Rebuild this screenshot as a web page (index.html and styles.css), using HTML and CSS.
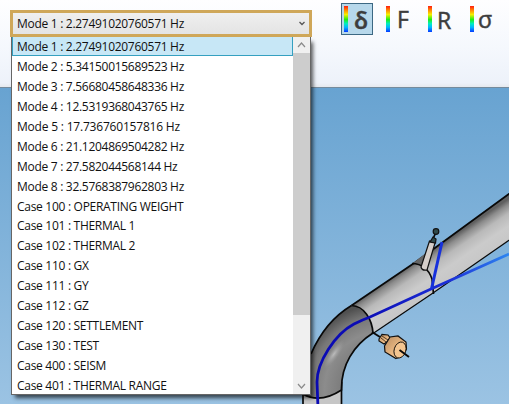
FILE: index.html
```html
<!DOCTYPE html>
<html lang="en">
<head>
<meta charset="utf-8">
<title>Modes</title>
<link rel="stylesheet" href="styles.css">
</head>
<body>
<header class="ribbon">
  <div class="combo"><span>Mode 1 : 2.27491020760571 Hz</span>
    <svg class="chevron" width="8" height="6" viewBox="0 0 8 6"><path d="M1.500 1 4 3.500 6.500 1"/></svg>
  </div>
  <nav class="tools">
    <button class="tool active"><i></i><span class="delta">δ</span></button>
    <button class="tool"><i></i><span class="f">F</span></button>
    <button class="tool"><i></i><span class="r">R</span></button>
    <button class="tool"><i></i><span class="sigma">σ</span></button>
  </nav>
</header>
<main class="viewport">
  <svg class="scene" width="509" height="316" viewBox="0 88 509 316">
    <defs>
      <linearGradient id="pipe" gradientUnits="userSpaceOnUse" x1="408" y1="267" x2="429" y2="298">
        <stop offset="0" stop-color="#606060"/><stop offset=".12" stop-color="#8c8c8c"/><stop offset=".32" stop-color="#b9b9b9"/><stop offset=".6" stop-color="#cbcbcb"/><stop offset="1" stop-color="#c6c6c6"/>
      </linearGradient>
      <radialGradient id="elbow" gradientUnits="userSpaceOnUse" cx="383" cy="390" r="86">
        <stop offset=".48" stop-color="#7c7c7c"/><stop offset=".68" stop-color="#8c8c8c"/><stop offset=".86" stop-color="#777"/><stop offset="1" stop-color="#505050"/>
      </radialGradient>
      <radialGradient id="shine" gradientUnits="userSpaceOnUse" cx="0" cy="0" r="1" gradientTransform="translate(334 354) rotate(-55) scale(17 5)">
        <stop offset="0" stop-color="#bcbcbc"/><stop offset="1" stop-color="#999" stop-opacity="0"/>
      </radialGradient>
      <linearGradient id="line" gradientUnits="userSpaceOnUse" x1="360" y1="0" x2="509" y2="0">
        <stop offset="0" stop-color="#0b0bb4"/><stop offset=".6" stop-color="#1c30d8"/><stop offset="1" stop-color="#2d86f0"/>
      </linearGradient>
      <linearGradient id="tan" x1="0" y1="0" x2="1" y2="1">
        <stop offset="0" stop-color="#b98c60"/><stop offset=".6" stop-color="#eebc86"/><stop offset="1" stop-color="#ffd8a5"/>
      </linearGradient>
    </defs>
    <path d="M303 390V406H341.500V385Z" fill="#c6c6c6"/>
    <path d="M303 390V406M341.500 382V406" class="edge"/>
    <path d="M351.500 305.500 415 262.500 509 193.500 515 189V236L433 293 373 333Z" fill="url(#pipe)"/>
    <path d="M351.500 305.500 415 262.500 515 189.500" class="edge"/>
    <path d="M373 333.500 433 293 515 236" class="edge thin"/>
    <path d="M351.500 305.500C334 316 320 333 311 354 305 367 303 380 303 394Q320 404 341.500 390C341 365 354 345 373 333 372 319 364 308 351.500 305.500Z" fill="url(#elbow)"/>
    <path d="M351.500 305.500C334 316 320 333 311 354M303 394Q320 404 341.500 390C341 365 354 345 373 333" class="edge"/>
    <path d="M351.500 305.500C364 306 372 319 373 333" class="edge"/>
    <ellipse cx="334" cy="354" rx="19" ry="19" fill="url(#shine)"/>
    <path d="M413 263 426 253 424 267Z" fill="#656565"/>
    <path d="M412 263.500Q427 264 432 279L433.500 294" class="edge"/>
    <path d="M318 408 317 382C317 362 335 334 354 324Q362 320 370 317L431 289 509 254" class="trace"/>
    <path d="M431.500 289 442 242" class="branch"/>
    <path d="M429.500 241 421 267Q422 271 427 270L435 243Z" fill="#d5cec9" class="part"/>
    <path d="M433 239 436 232" class="edge"/>
    <path d="M430 242 433 237 436 239 435.500 243Z" fill="#304a4b" class="part"/>
    <circle cx="436" cy="231.500" r="2.800" fill="#304a4b" class="part"/>
    <path d="M372 332 380 337" class="edge heavy"/>
    <path d="M379 339 382 334.500 388 335 391 339 384 344 379 341Z" fill="url(#tan)" class="part"/>
    <path d="M381 338 386 342M382 336 388 340" stroke="#302010" stroke-width=".8"/>
    <path d="M384.500 346 390 337 398 336 406 342 406.500 349Q403 357 396 358.500L385 352Z" fill="url(#tan)" class="part"/>
    <ellipse cx="400" cy="350" rx="5.800" ry="8.200" transform="rotate(18 400 350)" fill="#f4c590" stroke="#17110b" stroke-width=".9"/>
    <path d="M399.500 350 409 357" class="edge heavy"/>
  </svg>
</main>
<div class="dropdown">
  <ul class="list">
    <li class="selected">Mode 1 : 2.27491020760571 Hz</li>
    <li>Mode 2 : 5.34150015689523 Hz</li>
    <li>Mode 3 : 7.56680458648336 Hz</li>
    <li>Mode 4 : 12.5319368043765 Hz</li>
    <li class="wide">Mode 5 : 17.736760157816 Hz</li>
    <li>Mode 6 : 21.1204869504282 Hz</li>
    <li>Mode 7 : 27.582044568144 Hz</li>
    <li>Mode 8 : 32.5768387962803 Hz</li>
    <li>Case 100 : OPERATING WEIGHT</li>
    <li>Case 101 : THERMAL 1</li>
    <li>Case 102 : THERMAL 2</li>
    <li>Case 110 : GX</li>
    <li>Case 111 : GY</li>
    <li>Case 112 : GZ</li>
    <li>Case 120 : SETTLEMENT</li>
    <li>Case 130 : TEST</li>
    <li>Case 400 : SEISM</li>
    <li>Case 401 : THERMAL RANGE</li>
  </ul>
  <div class="scrollbar">
    <svg width="17" height="16" viewBox="0 0 17 16"><path d="M5 10 8.500 6 12 10"/></svg>
    <div class="thumb"></div>
    <svg width="17" height="16" viewBox="0 0 17 16"><path d="M5 6 8.500 10 12 6"/></svg>
  </div>
</div>
</body>
</html>
```
FILE: styles.css
```css
* { box-sizing: border-box; }
body {
  margin: 0;
  width: 509px;
  height: 404px;
  overflow: hidden;
  position: relative;
  font: 12px/18px "Open Sans", "Noto Sans", sans-serif;
  letter-spacing: -.29px;
  color: #111;
}
.ribbon {
  height: 88px;
  padding: 10px 0 0 10px;
  display: flex;
  align-items: flex-start;
  background: linear-gradient(#fefeff, #f5f8fd 55%, #edf2fa 95%, #e6e9ee);
  border-bottom: 1px solid #758b9d;
}
.combo {
  width: 302px;
  height: 27px;
  border: 3px solid #cfa759;
  padding: 0 3px 0 4px;
  display: flex;
  align-items: center;
  justify-content: space-between;
  background: linear-gradient(#efefef, #e4e4e4);
}
.chevron { fill: none; stroke: #555; stroke-width: 1.3; }
.tools { display: flex; gap: 10px; margin: -7px 0 0 29px; }
.tool {
  width: 32px;
  height: 32px;
  padding: 0 0 0 2px;
  border: 1px solid transparent;
  background: none;
  display: flex;
  align-items: center;
  font: 23px/28px "Open Sans", sans-serif;
  color: #3d3d3d;
  -webkit-text-stroke: .5px #3d3d3d;
}
.tool.active { background: #b7d8eb; border-color: #3c6883; }
.tool i {
  width: 4px;
  height: 26px;
  margin-right: 7px;
  flex: none;
  background: linear-gradient(#ff1c10, #ffa000 20%, #f4f000 33%, #22ee12 52%, #00edc0 68%, #00b6ff 82%, #0738ff);
}
.delta { font-weight: 600; margin-left: -1px; padding-top: 1px; }
.f { padding-bottom: 1px; }
.r { margin-left: -2px; padding-top: 1px; }
.sigma { margin-left: -3px; padding-bottom: 1px; }
.viewport { height: 316px; background: linear-gradient(#68a3d1, #9bc3e3); }
.scene { display: block; }
.edge { fill: none; stroke: #090909; stroke-width: 1.7; }
.thin { stroke-width: 1.2; }
.heavy { stroke-width: 2; }
.part { stroke: #111; stroke-width: 1.2; }
.trace { fill: none; stroke: url(#line); stroke-width: 2.8; }
.branch { stroke: #1731dc; stroke-width: 3; }
.dropdown {
  position: absolute;
  left: 11px;
  top: 37px;
  width: 300px;
  height: 358px;
  display: flex;
  border: 1px solid #666;
  border-top: 0;
  background: #fff;
  box-shadow: 3px 4px 4px -1px rgba(0, 0, 0, .65);
}
.list { flex: 1; margin: 0; padding: 0; list-style: none; overflow: hidden; }
.list li { height: 19.95px; line-height: 20px; padding-left: 5px; white-space: nowrap; }
.list .selected { height: 19px; margin-bottom: .95px; padding-left: 4px; line-height: 20px; border: 1px solid #35a0c0; border-top: 0; background: #c7e7f6; }
.list .wide { letter-spacing: -.2px; }
.scrollbar { width: 17px; display: flex; flex-direction: column; justify-content: space-between; background: #f0f0f0; }
.scrollbar svg { fill: none; stroke: #8b8b8b; stroke-width: 1.2; }
.thumb { height: 262px; margin-bottom: auto; background: #cdcdcd; }
```
